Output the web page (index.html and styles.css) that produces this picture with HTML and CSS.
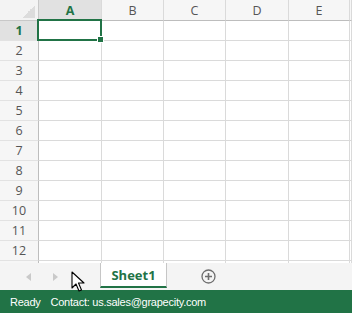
FILE: index.html
```html
<!DOCTYPE html>
<html>

    <head>
        <link rel="stylesheet" href="styles.css">
    </head>

    <body>
        <div id="sheet" class="sheet">
            <div class="selection"><span class="handle"></span></div>
        </div>
        <div class="tabbar">
            <div class="nav">
                <span class="arrow arrow-left"></span>
                <span class="arrow arrow-right"></span>
            </div>
            <div class="tab">Sheet1</div>
            <div class="add">
                <svg width="15" height="15" viewBox="0 0 15 15">
                    <circle cx="7.5" cy="7.5" r="6.5" fill="none" stroke="#6e6e6e" stroke-width="1.3"/>
                    <path d="M7.5 4v7M4 7.5h7" stroke="#6e6e6e" stroke-width="1.6"/>
                </svg>
            </div>
        </div>
        <div class="status">
            <span>Ready</span>
            <span>Contact: us.sales@grapecity.com</span>
        </div>
        <svg class="cursor" width="14" height="21" viewBox="0 0 14 21">
            <path d="M1 1v16l4-4 3 7 2.5-1-3-7h5.5z" fill="#fff" stroke="#000" stroke-width="1.1" stroke-linejoin="round"/>
        </svg>

        <script>
            var sheet = document.getElementById('sheet');
            var cols = ['', 'A', 'B', 'C', 'D', 'E', ''];
            var r, c, cell;
            for (r = 0; r <= 13; r += 1) {
                for (c = 0; c < cols.length; c += 1) {
                    cell = document.createElement('div');
                    cell.className = 'cell';
                    if (r === 0 && c === 0) {
                        cell.className += ' corner';
                    } else if (r === 0) {
                        cell.className += ' col-head';
                        cell.textContent = cols[c];
                        if (c === 1) cell.className += ' active';
                    } else if (c === 0) {
                        cell.className += ' row-head';
                        cell.textContent = r <= 12 ? r : '';
                        if (r === 1) cell.className += ' active';
                    }
                    sheet.appendChild(cell);
                }
            }
        </script>
    </body>

</html>
```

FILE: styles.css
```css
body {
    margin: 0;
    width: 352px;
    height: 318px;
    display: flex;
    flex-direction: column;
    font-family: "Open Sans", "Noto Sans", sans-serif;
    background: #fff;
    position: relative;
    overflow: hidden;
}
.sheet {
    position: relative;
    display: grid;
    grid-template-columns: 39px 63px 62px 62px 63px 61px 1fr;
    grid-template-rows: 21px;
    grid-auto-rows: 20px;
    height: 263px;
    overflow: hidden;
    flex: none;
}
.cell {
    box-sizing: border-box;
    border-right: 1px solid #dadada;
    border-bottom: 1px solid #dadada;
}
.corner {
    background: #f3f3f3 linear-gradient(to bottom right, transparent 50%, #dcdcdc 50%) no-repeat right 3px bottom 2px / 13px 13px;
    border-color: #c8c8c8;
}
.col-head,
.row-head {
    background: #f6f6f6;
    color: #555;
    font-size: 12.5px;
    display: flex;
    align-items: center;
    justify-content: center;
}
.col-head {
    border-bottom-color: #bdbdbd;
    border-right-color: #dadada;
}
.row-head {
    border-right-color: #bdbdbd;
    border-bottom-color: #e2e2e2;
}
.cell.active {
    background: #e1e1e1;
    color: #217346;
    font-weight: bold;
}
.selection {
    position: absolute;
    left: 37px;
    top: 19px;
    width: 61px;
    height: 18px;
    border: 2px solid #217346;
    z-index: 1;
}
.handle {
    position: absolute;
    right: -4px;
    bottom: -4px;
    width: 5px;
    height: 5px;
    background: #217346;
    border: 1px solid #fff;
}
.tabbar {
    height: 27px;
    background: #f4f4f4;
    display: flex;
    align-items: flex-start;
    flex: none;
}
.nav {
    width: 100px;
    height: 27px;
    display: flex;
    align-items: center;
    padding-left: 26px;
    gap: 22px;
    box-sizing: border-box;
}
.arrow {
    width: 0;
    height: 0;
    border-top: 4px solid transparent;
    border-bottom: 4px solid transparent;
}
.arrow-left {
    border-right: 5px solid #c9c9c9;
}
.arrow-right {
    border-left: 5px solid #c9c9c9;
}
.tab {
    width: 67px;
    height: 25px;
    box-sizing: border-box;
    background: #fff;
    border-left: 1px solid #c6c6c6;
    border-right: 1px solid #c6c6c6;
    border-bottom: 2px solid #217346;
    color: #217346;
    font-weight: bold;
    font-size: 13px;
    display: flex;
    align-items: center;
    justify-content: center;
}
.add {
    height: 27px;
    margin-left: 34px;
    display: flex;
    align-items: center;
}
.add svg {
    display: block;
}
.status {
    height: 23px;
    background: #217346;
    color: #fff;
    font-family: "Liberation Sans", Arial, sans-serif;
    font-size: 11px;
    letter-spacing: -0.25px;
    display: flex;
    align-items: center;
    padding-left: 10px;
    gap: 10px;
    flex: none;
}
.cursor {
    position: absolute;
    left: 71px;
    top: 271px;
    z-index: 2;
}
```
